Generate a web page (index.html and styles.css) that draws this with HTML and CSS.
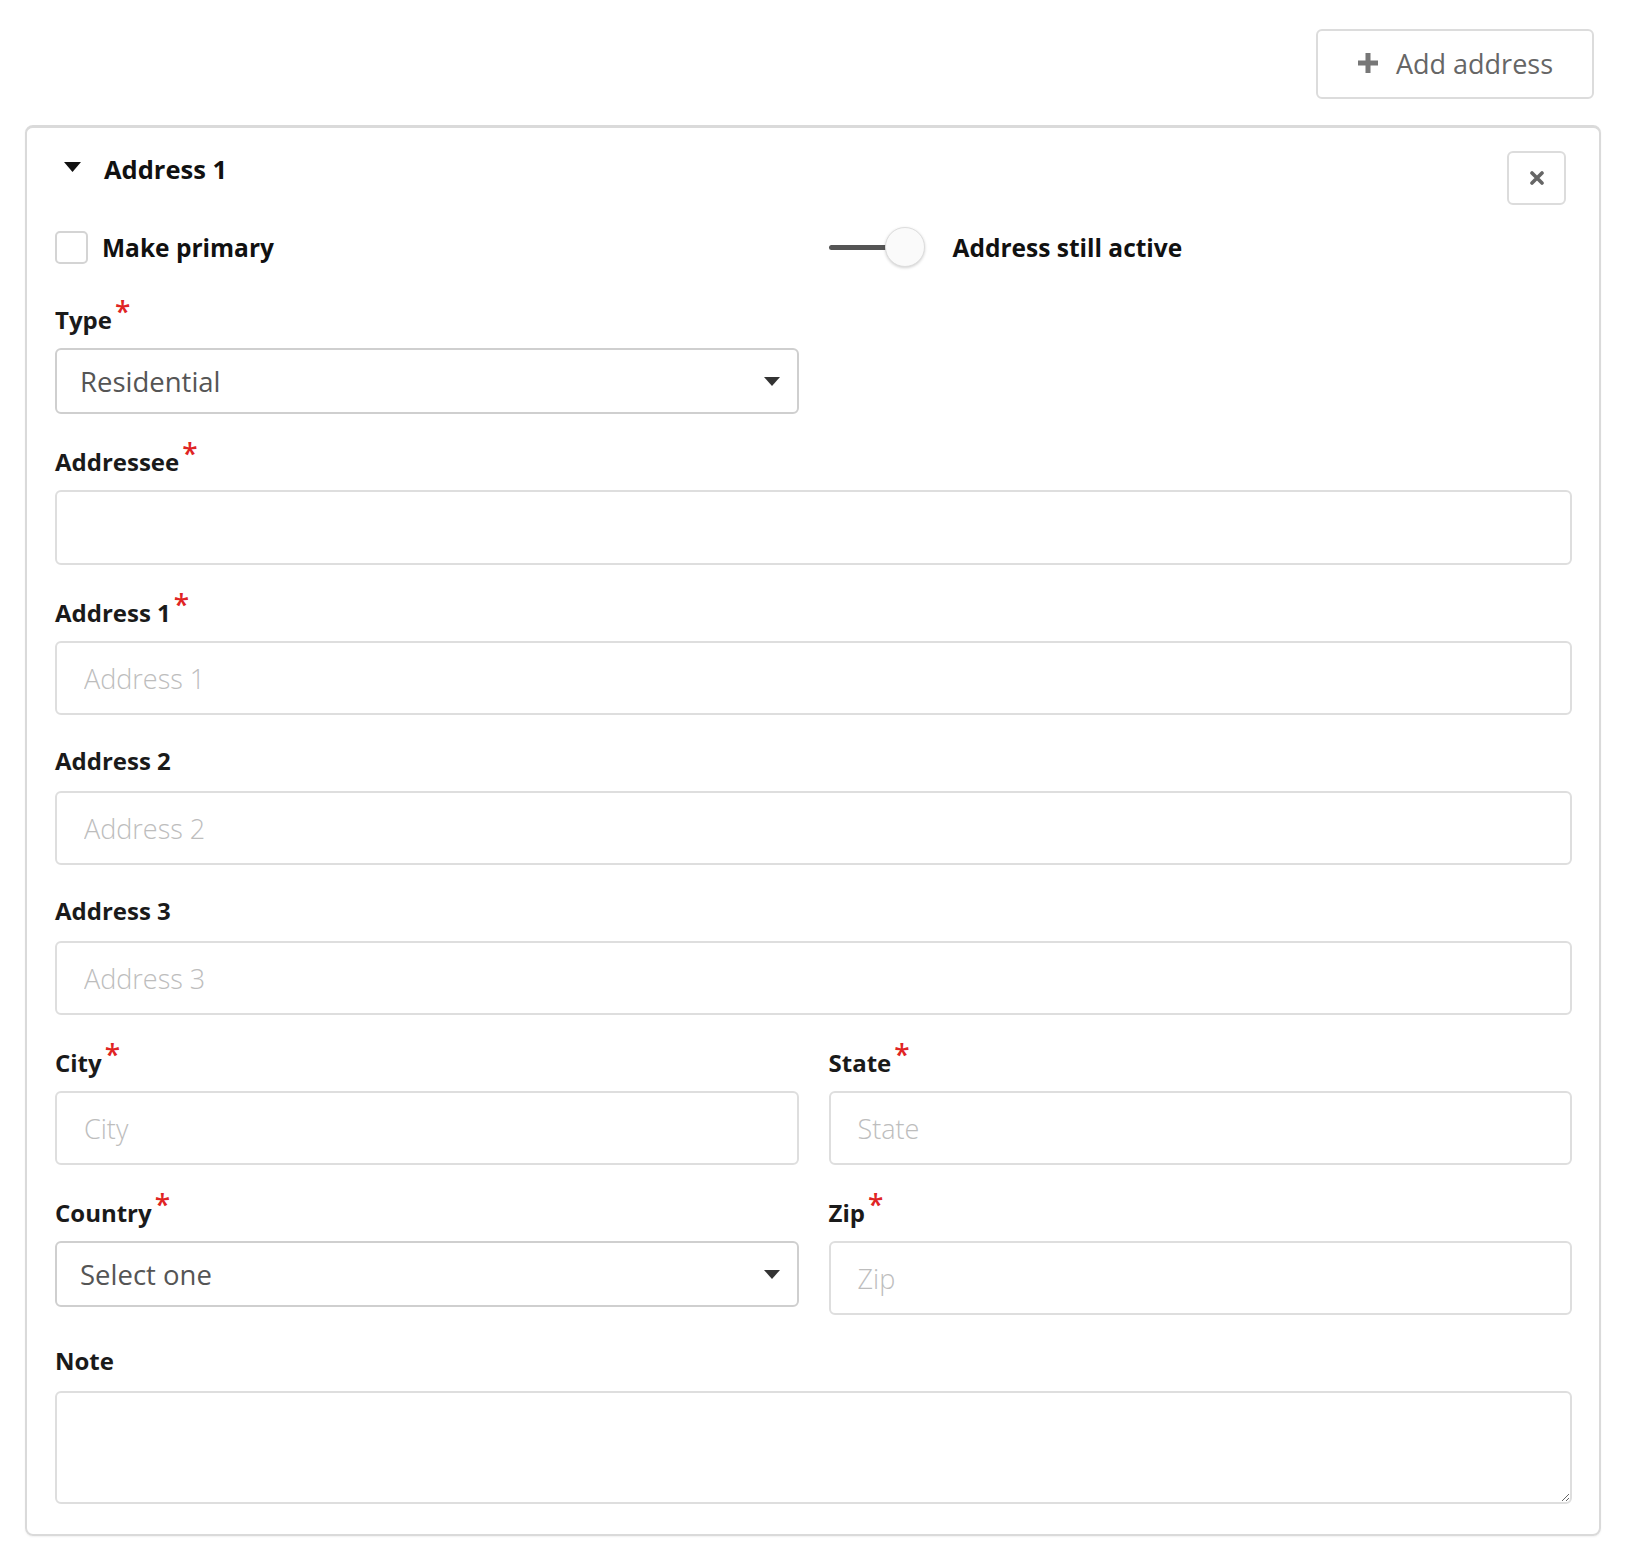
FILE: index.html
```html
<!DOCTYPE html>
<html lang="en">
<head>
<meta charset="utf-8">
<title>Addresses</title>
<link rel="stylesheet" href="styles.css">
</head>
<body>
<div class="page">
  <div class="toolbar">
    <button class="add-btn" type="button">
      <svg class="plus" width="22" height="22" viewBox="0 0 22 22"><path d="M11 1v20M1 11h20" stroke="#777" stroke-width="5" stroke-linecap="butt"/></svg>
      <span>Add address</span>
    </button>
  </div>

  <section class="card">
    <div class="card-head">
      <div class="title">
        <svg class="caret" width="17" height="10" viewBox="0 0 17 10"><path d="M0 0h17L8.5 10z" fill="#111"/></svg>
        <span>Address 1</span>
      </div>
      <button class="close-btn" type="button" aria-label="Remove">
        <svg width="14" height="14" viewBox="0 0 14 14"><path d="M2 2l10 10M12 2L2 12" stroke="#666" stroke-width="3.6" stroke-linecap="round"/></svg>
      </button>
    </div>

    <div class="grid2 opts">
      <label class="check">
        <span class="box"></span>
        <span>Make primary</span>
      </label>
      <div class="toggle">
        <span class="switch"><span class="track"></span><span class="knob"></span></span>
        <span>Address still active</span>
      </div>
    </div>

    <div class="grid2">
      <div class="field">
        <div class="label">Type<span class="req">*</span></div>
        <div class="select-wrap">
          <select class="select"><option>Residential</option></select>
          <svg class="arrow" width="16" height="9" viewBox="0 0 16 9"><path d="M0 0h16L8 9z" fill="#333"/></svg>
        </div>
      </div>
    </div>

    <div class="field">
      <div class="label">Addressee<span class="req">*</span></div>
      <input class="input tall" type="text">
    </div>

    <div class="field">
      <div class="label">Address 1<span class="req">*</span></div>
      <input class="input" type="text" placeholder="Address 1">
    </div>

    <div class="field">
      <div class="label">Address 2</div>
      <input class="input" type="text" placeholder="Address 2">
    </div>

    <div class="field">
      <div class="label">Address 3</div>
      <input class="input" type="text" placeholder="Address 3">
    </div>

    <div class="grid2">
      <div class="field">
        <div class="label">City<span class="req">*</span></div>
        <input class="input" type="text" placeholder="City">
      </div>
      <div class="field">
        <div class="label">State<span class="req">*</span></div>
        <input class="input" type="text" placeholder="State">
      </div>
    </div>

    <div class="grid2">
      <div class="field">
        <div class="label">Country<span class="req">*</span></div>
        <div class="select-wrap">
          <select class="select"><option>Select one</option></select>
          <svg class="arrow" width="16" height="9" viewBox="0 0 16 9"><path d="M0 0h16L8 9z" fill="#333"/></svg>
        </div>
      </div>
      <div class="field">
        <div class="label">Zip<span class="req">*</span></div>
        <input class="input zip" type="text" placeholder="Zip">
      </div>
    </div>

    <div class="field last">
      <div class="label">Note</div>
      <textarea class="note"></textarea>
    </div>
  </section>
</div>
</body>
</html>
```

FILE: styles.css
```css
* { box-sizing: border-box; }
html, body { margin: 0; padding: 0; background: #fff; }
body {
  font-family: "Open Sans", "Lato", "Liberation Sans", sans-serif;
  color: #1a1a1a;
}
.page {
  padding: 29px 28px 6px 25px;
}
.toolbar {
  display: flex;
  justify-content: flex-end;
  padding-right: 7px;
  margin-bottom: 26px;
}
.add-btn {
  width: 278px;
  height: 70px;
  border: 2px solid #dcdcdc;
  border-radius: 6px;
  background: #fff;
  display: flex;
  align-items: center;
  justify-content: center;
  gap: 17px;
  font-family: inherit;
  font-size: 27px;
  color: #666;
  padding: 0 0 2px 0;
}
.plus { flex: none; }
.card {
  border: 2px solid #dadada;
  border-top-width: 3px;
  border-radius: 8px;
  padding: 23px 27px 30px 28px;
  box-shadow: 0 1px 2px rgba(0,0,0,0.06);
}
.card-head {
  display: flex;
  justify-content: space-between;
  align-items: flex-start;
  margin-right: 6px;
}
.title {
  display: flex;
  align-items: center;
  height: 36px;
  font-size: 25.5px;
  font-weight: 700;
  color: #111;
  gap: 23px;
  padding-left: 9px;
}
.caret { margin-top: -4px; }
.close-btn {
  width: 59px;
  height: 54px;
  border: 2px solid #dcdcdc;
  border-radius: 6px;
  background: #fff;
  display: flex;
  align-items: center;
  justify-content: center;
  padding: 0;
}
.grid2 {
  display: grid;
  grid-template-columns: 1fr 1fr;
  column-gap: 30px;
  align-items: start;
}
.opts {
  margin-top: 22px;
  margin-bottom: 35px;
  height: 40px;
  align-items: center;
}
.check, .toggle {
  display: flex;
  align-items: center;
  font-size: 24.5px;
  font-weight: 700;
  color: #111;
}
.check { gap: 14px; }
.box {
  width: 33px;
  height: 33px;
  border: 2px solid #d4d4d4;
  border-radius: 5px;
  background: #fff;
}
.toggle { gap: 28px; }
.switch {
  position: relative;
  width: 96px;
  height: 40px;
  display: block;
}
.track {
  position: absolute;
  left: 0;
  top: 18px;
  width: 70px;
  height: 5px;
  border-radius: 3px;
  background: #555;
}
.knob {
  position: absolute;
  left: 56px;
  top: 0;
  width: 40px;
  height: 40px;
  border-radius: 50%;
  background: #fafafa;
  border: 1px solid #ddd;
  box-shadow: 0 1px 3px rgba(0,0,0,0.18);
}
.field { margin-bottom: 30px; }
.field.last { margin-bottom: 0; }
.label {
  height: 36px;
  line-height: 32px;
  font-size: 24px;
  font-weight: 700;
  color: #1a1a1a;
  margin-bottom: 10px;
}
.req {
  color: #e02424;
  font-weight: 600;
  font-size: 28px;
  margin-left: 3px;
  position: relative;
  top: -7px;
}
.input {
  display: block;
  width: 100%;
  height: 74px;
  border: 2px solid #dedede;
  border-radius: 6px;
  padding: 0 27px;
  font-family: inherit;
  font-size: 27px;
  font-weight: 300;
  color: #333;
  background: #fff;
  outline: none;
}
.input.tall { height: 75px; }
.input::placeholder { color: #bdbdbd; }
.select-wrap { position: relative; }
.select {
  display: block;
  width: 100%;
  height: 66px;
  border: 2px solid #cfcfcf;
  border-radius: 6px;
  padding: 0 60px 0 23px;
  font-family: inherit;
  font-size: 27.5px;
  font-weight: 400;
  color: #555;
  background: #fff;
  -webkit-appearance: none;
  appearance: none;
  outline: none;
}
.arrow {
  position: absolute;
  right: 19px;
  top: 29px;
  pointer-events: none;
}
.note {
  display: block;
  width: 100%;
  height: 113px;
  border: 2px solid #dedede;
  border-radius: 6px;
  font-family: inherit;
  font-size: 26px;
  padding: 12px 27px;
  resize: vertical;
  outline: none;
}
```
